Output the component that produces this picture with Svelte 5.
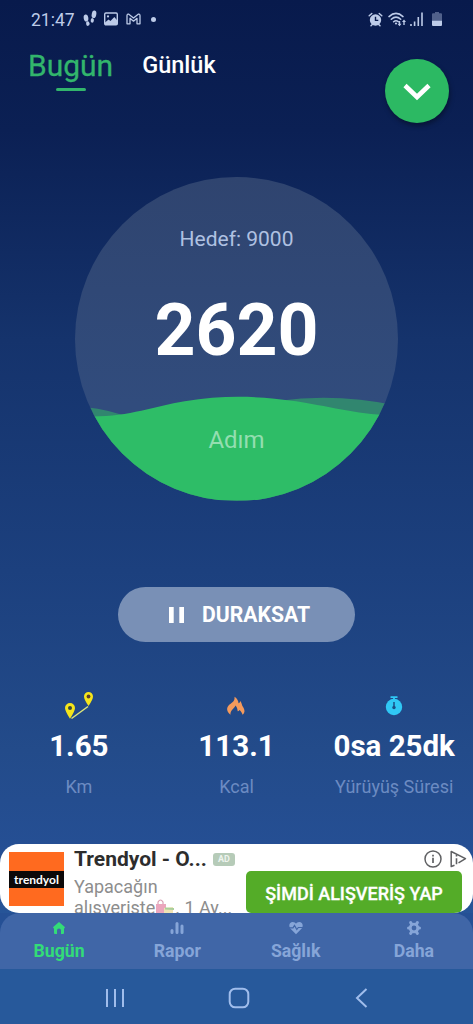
<script lang="ts">
	const goal = 9000
	const steps = 2620

	const stats = [
		{ icon: 'route', value: '1.65', label: 'Km' },
		{ icon: 'flame', value: '113.1', label: 'Kcal' },
		{ icon: 'timer', value: '0sa 25dk', label: 'Yürüyüş Süresi' }
	]

	const pages = [
		{ icon: 'home', label: 'Bugün' },
		{ icon: 'chart', label: 'Rapor' },
		{ icon: 'heart', label: 'Sağlık' },
		{ icon: 'gear', label: 'Daha' }
	]

	let tab = $state('Bugün')
	let page = $state('Bugün')
</script>

<div class="phone">
	<div class="status">
		<span class="clock">21:47</span>
		<svg class="steps-icon" width="14" height="18" viewBox="0 0 14 18">
			<ellipse cx="3" cy="8" rx="2.3" ry="3.500" transform="rotate(-10 3 8)" />
			<ellipse cx="4.800" cy="13.600" rx="1.700" ry="2.300" transform="rotate(-10 4.800 13.600)" />
			<ellipse cx="11" cy="4.300" rx="2.300" ry="3.800" transform="rotate(10 11 4.300)" />
			<ellipse cx="9.300" cy="10.400" rx="1.600" ry="2.300" transform="rotate(10 9.300 10.400)" />
		</svg>
		<svg class="photo-icon" width="14" height="14" viewBox="0 0 14 14">
			<rect x=".7" y="1" width="12.6" height="11.8" rx="1.2" fill="none" stroke="currentColor" stroke-width="1.4" />
			<circle cx="4" cy="4.4" r="1.1" />
			<path d="M1 10.500 4.500 7.500l2 1.600L10.3 5l3 3.500v4H1z" />
		</svg>
		<svg class="mail-icon" width="15" height="12" viewBox="0 0 15 12">
			<path
				d="M1 10.800V2.500Q1.200.8 2.800 1.200L7.500 5l4.700-3.800Q13.800.8 14 2.500v8.300h-3V5.300L7.500 8.200 4 5.300v5.500z"
				fill="none"
				stroke="currentColor"
				stroke-width="1.300"
				stroke-linejoin="round"
			/>
		</svg>
		<i class="dot"></i>
		<span class="spacer"></span>
		<svg width="15" height="15" viewBox="0 0 15 15">
			<circle cx="7.500" cy="8" r="5.700" />
			<path d="M1.200 3.800 3.800 1.500M13.800 3.800l-2.600-2.300M3 13.800l2-2M12 13.800l-2-2" stroke="currentColor" stroke-width="1.500" stroke-linecap="round" />
			<path d="M7.500 4.700v3.700h2.800" fill="none" stroke="#091b4e" stroke-width="1.400" />
		</svg>
		<svg class="wifi-icon" width="19" height="15" viewBox="0 0 19 15">
			<g fill="none" stroke="currentColor" stroke-width="1.500" stroke-linecap="round">
				<path d="M1 4.600Q8 -1.800 15 4.600M3.300 7.300Q8 3 12.700 7.300M5.600 9.800Q8 7.700 10.400 9.800" />
			</g>
			<circle cx="8" cy="11.500" r="1.100" />
			<path d="M12.200 9v2.700h1.300l-2 2.500-2-2.500h1.300V9zM15.300 13v-3H14l2-2.500 2 2.500h-1.300v3z" />
		</svg>
		<svg class="signal-icon" width="13" height="14" viewBox="0 0 13 14">
			<path d="M.2 12h1.600v2H.2zM3.800 9.500h1.600V14H3.800zM7.500 5h1.600v9H7.500zM11.200.5h1.600V14h-1.600z" />
		</svg>
		<svg class="battery-icon" width="10" height="14" viewBox="0 0 10 14">
			<path opacity=".4" d="M3 0h4v1.300h2q1 0 1 1V9H0V2.300q0-1 1-1h2z" />
			<path d="M0 8.800h10V13q0 1-1 1H1q-1 0-1-1z" />
		</svg>
	</div>

	<header>
		<button class="tab" class:active={tab === 'Bugün'} onclick={() => (tab = 'Bugün')}>Bugün</button>
		<button class="tab" class:active={tab === 'Günlük'} onclick={() => (tab = 'Günlük')}>Günlük</button>
		<button class="fab" aria-label="Aç">
			<svg width="28" height="18" viewBox="0 0 28 18">
				<path d="M2 2.500 14 14 26 2.500" fill="none" stroke="#fff" stroke-width="4.600" />
			</svg>
		</button>
	</header>

	<section class="dial">
		<svg class="wave" viewBox="0 0 324 324" aria-hidden="true">
			<path fill="#31866f" d="M0 230Q22 230 47 238L160 250 205 224Q262 216 324 229V324H0z" />
			<path fill="#2ebd67" d="M0 239C48 243 75 230 110 224.500C150 218 182 219 222 224.500C262 231 285 238 324 239V324H0z" />
		</svg>
		<p class="goal">Hedef: {goal}</p>
		<p class="count">{steps}</p>
		<p class="unit">Adım</p>
	</section>

	<button class="pause">
		<svg width="15" height="16" viewBox="0 0 15 16">
			<path d="M0 0h4.700v16H0zM10.300 0H15v16h-4.700z" />
		</svg>
		<span>DURAKSAT</span>
	</button>

	<section class="stats">
		{#each stats as stat}
			<div class="stat">
				{#if stat.icon === 'route'}
					<svg width="30" height="30" viewBox="0 0 30 30">
						<path d="M7.500 28.500 24 16.500" stroke="#dfe77a" stroke-width="1.500" />
						<path fill="#f5e51b" d="M6 28.800Q1 21 1 18a5 5 0 0 1 10 0q0 3-5 10.800zM24.500 16Q20 9.500 20 6.500a4.500 4.500 0 0 1 9 0q0 3-4.500 9.500z" />
						<circle cx="6" cy="18" r="2" fill="#3c4a3a" />
						<circle cx="24.500" cy="6.500" r="1.900" fill="#5d3f2a" />
					</svg>
				{:else if stat.icon === 'flame'}
					<svg width="30" height="30" viewBox="0 0 30 30">
						<path
							fill="#f49a5c"
							d="M9.500 24.800C5.500 21.500 5 17.500 8.500 14.500 12 12 14 10.500 13.500 6.700c2.500 1.500 4 4 4 6.500 1-.3 1.600-1.100 1.700-2.200 1.300 1.200 1.500 3 2 4.500 1.800 3 4 6.500.3 9.300-.3-2-1.500-3.500-3-4.800-.5.8-1 1.200-1.800 1.300-.2-2.300-.8-4.300-2.200-5.800-1.500 3.200-5.500 5-5 9.300z"
						/>
					</svg>
				{:else}
					<svg width="30" height="30" viewBox="0 0 30 30">
						<circle cx="15" cy="17" r="8.200" fill="#30c8f5" />
						<path d="M11.500 7.200h7M15 7.200v3" stroke="#30c8f5" stroke-width="1.800" />
						<path d="M15 12v5" stroke="#1b4f86" stroke-width="1.500" />
						<circle cx="15" cy="17.500" r="1.700" fill="#1b4f86" />
					</svg>
				{/if}
				<strong>{stat.value}</strong>
				<span>{stat.label}</span>
			</div>
		{/each}
	</section>

	<aside class="ad">
		<div class="brand"><span>trendyol</span></div>
		<div class="copy">
			<div class="title">
				<b>Trendyol - O...</b>
				<span class="tag">AD</span>
			</div>
			<p>
				Yapacağın<br />alışverişte<svg class="bags" width="20" height="18" viewBox="0 0 20 18">
					<path d="M3 5V3q2.500-4 5 0v2" fill="none" stroke="#d9a0b4" stroke-width="1.200" />
					<path fill="#eba6bd" d="M1 5h10v13H1z" />
					<path fill="#efe3b4" d="M9 9l9-1v10H9z" />
					<path fill="#a9cf9b" d="M10 8.500 19 9v2l-9-.5z" />
				</svg>. 1 Ay...
			</p>
		</div>
		<div class="action">
			<div class="marks">
				<svg width="18" height="18" viewBox="0 0 18 18" fill="none" stroke="#5f6063">
					<circle cx="9" cy="9" r="8" stroke-width="1.500" />
					<path d="M9 7.800V13M9 4.800v1.600" stroke-width="1.700" />
				</svg>
				<svg width="17" height="18" viewBox="0 0 17 18" fill="none" stroke="#5f6063">
					<path d="M4.500 15.200 1.200 16.500V1.500L15.500 8.600 8.500 12.800" stroke-width="1.500" stroke-linejoin="round" />
					<path d="M6.500 8.200v6M6.500 5v1.500" stroke-width="1.600" />
				</svg>
			</div>
			<button class="cta">ŞİMDİ ALIŞVERİŞ YAP</button>
		</div>
	</aside>

	<div class="nav-back">
		<nav>
			{#each pages as item}
				<button class:active={page === item.label} onclick={() => (page = item.label)}>
					<svg width="14" height="14" viewBox="0 0 14 14">
						{#if item.icon === 'home'}
							<path d="M7 1 12.800 6v1.200H12V12q0 1-1 1H9V9.500a2 2 0 0 0-4 0V13H3q-1 0-1-1V7.200h-.8V6z" />
						{:else if item.icon === 'chart'}
							<path d="M2 9.500v2M7 2.500v9M12 5v6.500" stroke="currentColor" stroke-width="3" stroke-linecap="round" />
						{:else if item.icon === 'heart'}
							<path d="M7 13.200 1.300 7.500C-1 4 1 1 3.700 1 5.300 1 6.300 1.800 7 2.800 7.700 1.800 8.700 1 10.300 1 13 1 15 4 12.700 7.500z" />
							<path d="M0 6.800h4L5.500 4.500l2.300 4 1.500-2H14" fill="none" stroke="#4066a7" stroke-width="1.200" />
						{:else}
							<circle cx="7" cy="7" r="3.800" fill="none" stroke="currentColor" stroke-width="2.800" />
							<path
								d="M3.700 1.600 4.700 3.200M10.300 1.600 9.300 3.200M3.700 12.400 4.700 10.800M10.300 12.400 9.300 10.800M1.500 7h1M11.500 7h1"
								stroke="currentColor"
								stroke-width="3"
								stroke-linecap="round"
							/>
						{/if}
					</svg>
					<span>{item.label}</span>
				</button>
			{/each}
		</nav>
	</div>

	<div class="system">
		<svg width="20" height="22" viewBox="0 0 20 22">
			<path d="M2 2v18M10 2v18M18 2v18" />
		</svg>
		<svg width="22" height="22" viewBox="0 0 22 22">
			<rect x="1.700" y="1.700" width="18.600" height="18.600" rx="5.500" />
		</svg>
		<svg width="14" height="22" viewBox="0 0 14 22">
			<path d="M12.500 2 3 11l9.500 9" />
		</svg>
	</div>
</div>

<style>
	:global(body) {
		margin: 0;
		background: #27599b;
	}

	.phone {
		display: flex;
		flex-direction: column;
		width: 473px;
		height: 1024px;
		overflow: hidden;
		font-family: Roboto, sans-serif;
		color: #fff;
		background: linear-gradient(#081a4c 0, #0b2054 130px, #15336c 340px, #1c407e 570px, #234b8a 750px, #254f94 850px, #27599b 970px);
	}

	button {
		border: 0;
		padding: 0;
		background: none;
		font-family: inherit;
		color: inherit;
	}

	p {
		margin: 0;
	}

	svg {
		display: block;
		flex: none;
		fill: currentColor;
	}

	.status {
		display: flex;
		align-items: center;
		height: 38px;
		padding: 0 31px;
		color: #bdcbe8;
	}

	.clock {
		font-size: 17.500px;
		line-height: 38px;
		padding-top: 1px;
	}

	.steps-icon {
		margin-left: 8px;
	}

	.photo-icon {
		margin-left: 7px;
	}

	.mail-icon {
		margin-left: 8px;
	}

	.dot {
		width: 5px;
		height: 5px;
		margin-left: 10px;
		border-radius: 50%;
		background: currentColor;
	}

	.spacer {
		flex: 1;
	}

	.wifi-icon {
		margin-left: 5px;
	}

	.signal-icon {
		margin-left: 3px;
	}

	.battery-icon {
		margin-left: 9px;
	}

	header {
		display: flex;
		align-items: flex-start;
		height: 139px;
		padding: 0 24px 0 28px;
		box-sizing: border-box;
	}

	.tab {
		margin: 10px 29px 0 0;
		font-size: 23.500px;
		font-weight: 500;
		line-height: 34px;
	}

	.tab.active {
		margin-top: 11px;
		font-size: 30px;
		font-weight: 400;
		-webkit-text-stroke: 0.3px;
		color: #32b56c;
	}

	.tab.active::after {
		content: '';
		display: block;
		width: 30px;
		height: 3px;
		margin: 5px auto 0;
		border-radius: 2px;
		background: currentColor;
	}

	.fab {
		display: flex;
		align-items: center;
		justify-content: center;
		width: 64px;
		height: 64px;
		margin: 21px 0 0 auto;
		border-radius: 50%;
		background: #2cb963;
		box-shadow: 1px 3px 5px rgba(0, 0, 0, 0.35);
	}

	.fab svg {
		margin-top: 2px;
	}

	.dial {
		position: relative;
		align-self: center;
		width: 323px;
		height: 324px;
		border-radius: 50%;
		overflow: hidden;
		text-align: center;
		background: linear-gradient(#2f446f, #314c7d 70%);
	}

	.wave {
		position: absolute;
		inset: 0;
		width: 100%;
		height: 100%;
	}

	.goal,
	.count,
	.unit {
		position: relative;
	}

	.goal {
		padding-top: 47px;
		font-size: 21px;
		line-height: 30px;
		color: #afc1e2;
	}

	.count {
		margin-top: 37px;
		font-size: 71.500px;
		font-weight: 700;
		line-height: 80px;
	}

	.unit {
		margin-top: 54px;
		font-size: 24px;
		line-height: 30px;
		color: #93deb0;
	}

	.pause {
		display: flex;
		align-items: center;
		align-self: center;
		width: 237px;
		height: 55px;
		margin-top: 86px;
		padding-left: 51px;
		border-radius: 28px;
		background: #7990b6;
	}

	.pause span {
		margin-left: 18px;
		font-size: 21.200px;
		font-weight: 700;
	}

	.stats {
		display: grid;
		grid-template-columns: repeat(3, 1fr);
		margin-top: 48px;
	}

	.stat {
		display: flex;
		flex-direction: column;
		align-items: center;
		white-space: nowrap;
	}

	.stat strong {
		margin-top: 9px;
		font-size: 29.500px;
		font-weight: 700;
		line-height: 34px;
	}

	.stat span {
		margin-top: 12px;
		font-size: 18px;
		line-height: 24px;
		color: #6c8bc2;
	}

	.ad {
		display: flex;
		height: 69px;
		margin-top: auto;
		border-radius: 19px;
		overflow: hidden;
		background: #fff;
	}

	.brand {
		display: flex;
		align-items: center;
		flex: none;
		width: 55px;
		height: 54px;
		margin: 8px 0 0 9px;
		background: #ff6a1f;
	}

	.brand span {
		width: 100%;
		font-family: Lato, sans-serif;
		font-size: 12px;
		font-weight: 700;
		line-height: 17px;
		text-align: center;
		background: #0c0909;
	}

	.copy {
		flex: none;
		width: 172px;
		margin-left: 10px;
		white-space: nowrap;
	}

	.title {
		display: flex;
		align-items: center;
		height: 31px;
		color: #2d2d2d;
	}

	.title b {
		font-size: 21px;
		line-height: 31px;
	}

	.tag {
		width: 22px;
		margin: -1px 0 0 6px;
		border-radius: 3px;
		font-size: 9px;
		font-weight: 700;
		line-height: 13px;
		text-align: center;
		color: #eef4ee;
		background: #b6cbb8;
	}

	.copy p {
		margin-top: 1px;
		font-size: 18px;
		line-height: 21px;
		color: #8d8d8d;
	}

	.bags {
		display: inline-block;
		vertical-align: -3px;
	}

	.action {
		display: flex;
		flex-direction: column;
		width: 227px;
	}

	.marks {
		display: flex;
		gap: 8px;
		height: 21px;
		padding: 6px 5px 0 0;
		margin-left: 178px;
	}

	.cta {
		flex: none;
		width: 216px;
		height: 42px;
		padding-top: 2px;
		border-radius: 5px;
		font-size: 18px;
		font-weight: 500;
		-webkit-text-stroke: 0.3px;
		background: #54ac28;
		white-space: nowrap;
	}

	.nav-back {
		background: #255095;
	}

	nav {
		display: grid;
		grid-template-columns: repeat(4, 1fr);
		height: 56px;
		border-radius: 20px 20px 0 0;
		background: #4066a7;
	}

	nav button {
		display: flex;
		flex-direction: column;
		align-items: center;
		padding-top: 8px;
		color: #86a5d8;
	}

	nav span {
		margin-top: 5px;
		font-size: 17.700px;
		font-weight: 700;
		line-height: 22px;
	}

	nav .active {
		color: #33dc78;
	}

	.system {
		display: flex;
		align-items: center;
		height: 55px;
		padding: 2px 105px 0 105px;
		box-sizing: border-box;
		justify-content: space-between;
		background: #27599b;
		color: #a0bdec;
	}

	.system svg {
		fill: none;
		stroke: currentColor;
		stroke-width: 2;
	}

	.system svg:nth-child(2) {
		margin-right: 2px;
	}
</style>
